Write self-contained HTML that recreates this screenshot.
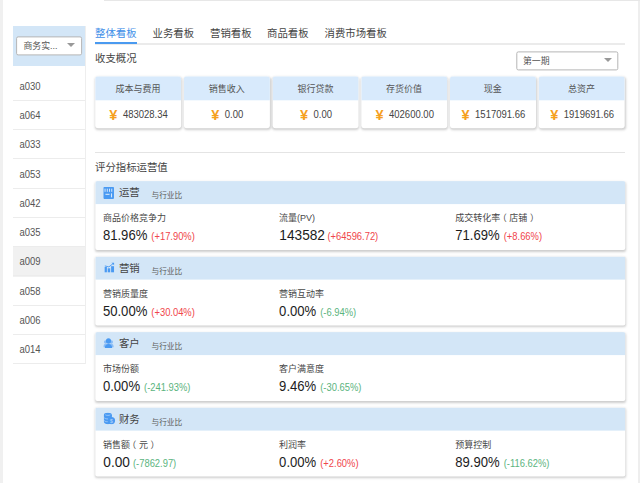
<!DOCTYPE html><html lang="zh-CN"><head><meta charset="utf-8"><title>整体看板</title><style>
html,body{margin:0;padding:0;}
body{width:640px;height:483px;overflow:hidden;background:#fff;position:relative;font-family:"Liberation Sans","Noto Sans CJK SC",sans-serif;color:#444;}
.abs{position:absolute;}
.t{position:absolute;white-space:nowrap;line-height:1;}
.n{display:inline-block;transform:scaleY(1.15);transform-origin:0 85%;}
.edge-l{left:0;top:0;width:2.8px;height:483px;background:#f0f0f0;}
.edge-r{left:638.2px;top:0;width:1.8px;height:483px;background:#eeeeee;}
.edge-t{left:104px;top:0;width:536px;height:1px;background:#e7e7e7;}
.side-h{left:13px;top:26px;width:72px;height:39.6px;background:#d3e6f7;}
.sel{background:#fff;border:1px solid #b5b5b5;border-radius:2px;box-sizing:border-box;}
.arr{width:0;height:0;border-left:4px solid transparent;border-right:4px solid transparent;border-top:4px solid #999;}
.side-line{left:12.5px;width:72.5px;height:1px;background:#ececec;}
.side-v{left:84.5px;top:26px;width:1px;height:338px;background:#eeeeee;}
.si{left:19.4px;font-size:9.5px;color:#555;}
.tab{font-size:10.4px;color:#444;top:28.5px;}
.card{left:0;top:0;width:85.6px;height:52px;border-radius:3px;background:#fff;box-shadow:0.3px 1px 2.5px rgba(0,0,0,.2);overflow:hidden;}
.card .h{position:absolute;left:0;top:0;width:100%;height:24px;background:#d8eafc;}
.card .ht{position:absolute;left:0;width:100%;top:9.3px;text-align:center;font-size:9px;line-height:1;color:#555;}
.card .v{position:absolute;left:0.6px;width:100%;top:34.3px;text-align:center;font-size:9.5px;line-height:1;color:#444;white-space:nowrap;}
.card .y{color:#f5a01e;font-weight:bold;margin-right:5.5px;font-size:14.5px;display:inline-block;vertical-align:-1.4px;line-height:9.5px;}
.sec{left:0;top:0;width:530px;height:69px;border-radius:2px;background:#fff;box-shadow:0.3px 1px 2.5px rgba(0,0,0,.2);overflow:hidden;}
.sec .h{position:absolute;left:0;top:0;width:100%;height:23px;background:#d3e6f7;}
.sec .ic{position:absolute;}
.sec .nm{left:23.6px;top:7.3px;font-size:10.4px;color:#444;}
.sec .cmp{left:56.2px;top:11.2px;font-size:7.7px;color:#5a5a5a;}
.sec .lb{top:32.5px;font-size:9px;color:#484848;}
.sec .val{top:48.2px;font-size:13.4px;color:#1c1c1c;}
.sec .d{font-size:9.4px;margin-left:4px;}
.pl{position:relative;left:-2.6px;}
.pr{position:relative;left:2.6px;}
.r{color:#f0454b;}
.g{color:#5bb47e;}
</style></head><body>
<div class="abs edge-l"></div><div class="abs edge-r"></div><div class="abs edge-t"></div>
<div class="abs side-h"></div>
<div class="abs sel" style="left:0;top:0;transform:translate(16.1px,36.4px);width:66px;height:19px"></div>
<div class="t" style="left:23.5px;top:41.6px;font-size:8.9px;color:#555">商务实...</div>
<div class="abs arr" style="left:67.1px;top:43px"></div>
<div class="abs side-v"></div>
<div class="t si" style="top:81.7px"><span class="n">a030</span></div>
<div class="abs side-line" style="top:99.9px"></div>
<div class="t si" style="top:111.0px"><span class="n">a064</span></div>
<div class="abs side-line" style="top:129.2px"></div>
<div class="t si" style="top:140.2px"><span class="n">a033</span></div>
<div class="abs side-line" style="top:158.4px"></div>
<div class="t si" style="top:169.5px"><span class="n">a053</span></div>
<div class="abs side-line" style="top:187.7px"></div>
<div class="t si" style="top:198.8px"><span class="n">a042</span></div>
<div class="abs side-line" style="top:216.9px"></div>
<div class="t si" style="top:228.0px"><span class="n">a035</span></div>
<div class="abs side-line" style="top:246.2px"></div>
<div class="abs" style="left:13px;top:247.2px;width:72px;height:29.4px;background:#f1f1f1"></div>
<div class="t si" style="top:257.3px"><span class="n">a009</span></div>
<div class="abs side-line" style="top:275.4px"></div>
<div class="t si" style="top:286.6px"><span class="n">a058</span></div>
<div class="abs side-line" style="top:304.6px"></div>
<div class="t si" style="top:315.9px"><span class="n">a006</span></div>
<div class="abs side-line" style="top:333.9px"></div>
<div class="t si" style="top:345.1px"><span class="n">a014</span></div>
<div class="abs side-line" style="top:363.1px"></div>
<div class="abs" style="left:95px;top:43px;width:530px;height:2px;background:#ebebeb"></div>
<div class="t tab" style="left:95px;color:#3f8fe8;">整体看板</div>
<div class="t tab" style="left:152.5px;">业务看板</div>
<div class="t tab" style="left:210px;">营销看板</div>
<div class="t tab" style="left:267px;">商品看板</div>
<div class="t tab" style="left:324.5px;">消费市场看板</div>
<div class="abs" style="left:95px;top:42px;width:42px;height:2px;background:#4a9af0"></div>
<div class="t" style="left:95px;top:54.4px;font-size:10.4px;color:#444">收支概况</div>
<div class="abs sel" style="left:0;top:0;transform:translate(516.3px,51.4px);width:102px;height:19px"></div>
<div class="t" style="left:523px;top:56.6px;font-size:8.9px;color:#555">第一期</div>
<div class="abs arr" style="left:603.6px;top:57.6px"></div>
<div class="abs card" style="transform:translate(95.20px,76.3px)"><div class="h"></div><div class="ht">成本与费用</div><div class="v"><span class="y">¥</span><span class="n">483028.34</span></div></div>
<div class="abs card" style="transform:translate(183.90px,76.3px)"><div class="h"></div><div class="ht">销售收入</div><div class="v"><span class="y">¥</span><span class="n">0.00</span></div></div>
<div class="abs card" style="transform:translate(272.60px,76.3px)"><div class="h"></div><div class="ht">银行贷款</div><div class="v"><span class="y">¥</span><span class="n">0.00</span></div></div>
<div class="abs card" style="transform:translate(361.30px,76.3px)"><div class="h"></div><div class="ht">存货价值</div><div class="v"><span class="y">¥</span><span class="n">402600.00</span></div></div>
<div class="abs card" style="transform:translate(450.00px,76.3px)"><div class="h"></div><div class="ht">现金</div><div class="v"><span class="y">¥</span><span class="n">1517091.66</span></div></div>
<div class="abs card" style="transform:translate(538.70px,76.3px)"><div class="h"></div><div class="ht">总资产</div><div class="v"><span class="y">¥</span><span class="n">1919691.66</span></div></div>
<div class="abs" style="left:95px;top:151.5px;width:530px;height:1px;background:#e4e4e4"></div>
<div class="t" style="left:95px;top:163px;font-size:10.4px;color:#444">评分指标运营值</div>
<div class="abs sec" style="transform:translate(95.3px,181.10px)"><div class="h"></div><div class="ic" style="left:8.2px;top:6px"><svg viewBox="0 0 11 12" width="10.7" height="11.8" preserveAspectRatio="none" style="display:block"><rect x="0" y="0" width="11" height="12" rx="0.8" fill="#4a9af2"/><g fill="#d6e8fb"><rect x="1.3" y="1.6" width="1" height="3.2"/><rect x="3.6" y="1.6" width="1" height="3.2"/><rect x="5.9" y="1.6" width="1" height="3.2"/><rect x="8.2" y="1.6" width="1" height="3.2"/><rect x="2.2" y="6.8" width="4.2" height="1.1"/><rect x="7.9" y="6.4" width="1.1" height="4"/></g></svg></div><div class="t nm">运营</div><div class="t cmp">与行业比</div>
<div class="t lb" style="left:7.6px">商品价格竞争力</div><div class="t val" style="left:7.6px"><span class="n" style="font-size:13.1px">81.96%</span><span class="n d r">(+17.90%)</span></div>
<div class="t lb" style="left:183.8px">流量(PV)</div><div class="t val" style="left:183.8px"><span class="n" style="font-size:13.1px;transform:scale(1.045,1.15);margin-right:0.6px">143582</span><span class="n d r">(+64596.72)</span></div>
<div class="t lb" style="left:360px">成交转化率<span class="pl">（</span>店铺<span class="pr">）</span></div><div class="t val" style="left:360px"><span class="n" style="font-size:13.1px">71.69%</span><span class="n d r">(+8.66%)</span></div>
</div>
<div class="abs sec" style="transform:translate(95.3px,256.60px)"><div class="h"></div><div class="ic" style="left:8.6px;top:6px"><svg viewBox="0 0 10 10" width="10" height="10" style="display:block"><g fill="#4a9af2"><rect x="0.2" y="4.3" width="2.4" height="5.7"/><rect x="3.4" y="5.7" width="2.5" height="4.3"/><rect x="6.8" y="3.6" width="3" height="6.4"/><path d="M7 0 L10 0 L10 3 Z"/></g><path d="M0.5 3.3 L4.6 4.3 L8.8 1" stroke="#4a9af2" stroke-width="0.9" fill="none"/></svg></div><div class="t nm">营销</div><div class="t cmp">与行业比</div>
<div class="t lb" style="left:7.6px">营销质量度</div><div class="t val" style="left:7.6px"><span class="n" style="font-size:13.1px">50.00%</span><span class="n d r">(+30.04%)</span></div>
<div class="t lb" style="left:183.8px">营销互动率</div><div class="t val" style="left:183.8px"><span class="n" style="font-size:13.1px">0.00%</span><span class="n d g">(-6.94%)</span></div>
</div>
<div class="abs sec" style="transform:translate(95.3px,332.10px)"><div class="h"></div><div class="ic" style="left:8.3px;top:5.7px"><svg viewBox="0 0 11 10" width="10.4" height="10.2" preserveAspectRatio="none" style="display:block"><g fill="#8bbdf6"><circle cx="2.4" cy="3.8" r="1.7"/><circle cx="8.6" cy="3.8" r="1.7"/><path d="M0 9 C0 6.6 1 5.6 2.6 5.6 L8.4 5.6 C10 5.6 11 6.6 11 9 Z"/></g><g fill="#4a9af2"><circle cx="5.5" cy="2.8" r="2.7"/><path d="M1.6 10 C1.6 7 3.2 5.8 5.5 5.8 C7.8 5.8 9.4 7 9.4 10 Z"/></g></svg></div><div class="t nm">客户</div><div class="t cmp">与行业比</div>
<div class="t lb" style="left:7.6px">市场份额</div><div class="t val" style="left:7.6px"><span class="n" style="font-size:13.1px">0.00%</span><span class="n d g">(-241.93%)</span></div>
<div class="t lb" style="left:183.8px">客户满意度</div><div class="t val" style="left:183.8px"><span class="n" style="font-size:13.1px">9.46%</span><span class="n d g">(-30.65%)</span></div>
</div>
<div class="abs sec" style="transform:translate(95.3px,407.60px)"><div class="h"></div><div class="ic" style="left:7.5px;top:4.8px"><svg viewBox="0 0 12 12" width="12" height="12" style="display:block"><g fill="#4a9af2"><ellipse cx="4.6" cy="2.3" rx="4" ry="2.2"/><path d="M0.6 2.3 V9.2 C0.6 10.8 2.4 11.6 4.6 11.6 C6.8 11.6 8.6 10.8 8.6 9.2 V2.3 Z"/><circle cx="8.2" cy="8" r="3.6"/></g><g stroke="#b9d8fa" stroke-width="0.7" fill="none"><path d="M0.8 5 C1.6 6.2 3.4 6.4 4.8 6.3"/><path d="M0.8 7.8 C1.6 9 3.2 9.2 4.4 9.1"/><path d="M2 2.2 C3 3 6 3 7 2.2"/></g><text x="8.2" y="10" font-size="5" font-weight="bold" text-anchor="middle" fill="#a9d0fb" font-family="Liberation Sans, sans-serif">$</text></svg></div><div class="t nm">财务</div><div class="t cmp">与行业比</div>
<div class="t lb" style="left:7.6px">销售额<span class="pl">（</span>元<span class="pr">）</span></div><div class="t val" style="left:7.6px"><span class="n" style="font-size:13.1px;transform:scale(1.045,1.15);margin-right:0.6px">0.00</span><span class="n d g">(-7862.97)</span></div>
<div class="t lb" style="left:183.8px">利润率</div><div class="t val" style="left:183.8px"><span class="n" style="font-size:13.1px">0.00%</span><span class="n d r">(+2.60%)</span></div>
<div class="t lb" style="left:360px">预算控制</div><div class="t val" style="left:360px"><span class="n" style="font-size:13.1px">89.90%</span><span class="n d g">(-116.62%)</span></div>
</div>
</body></html>
